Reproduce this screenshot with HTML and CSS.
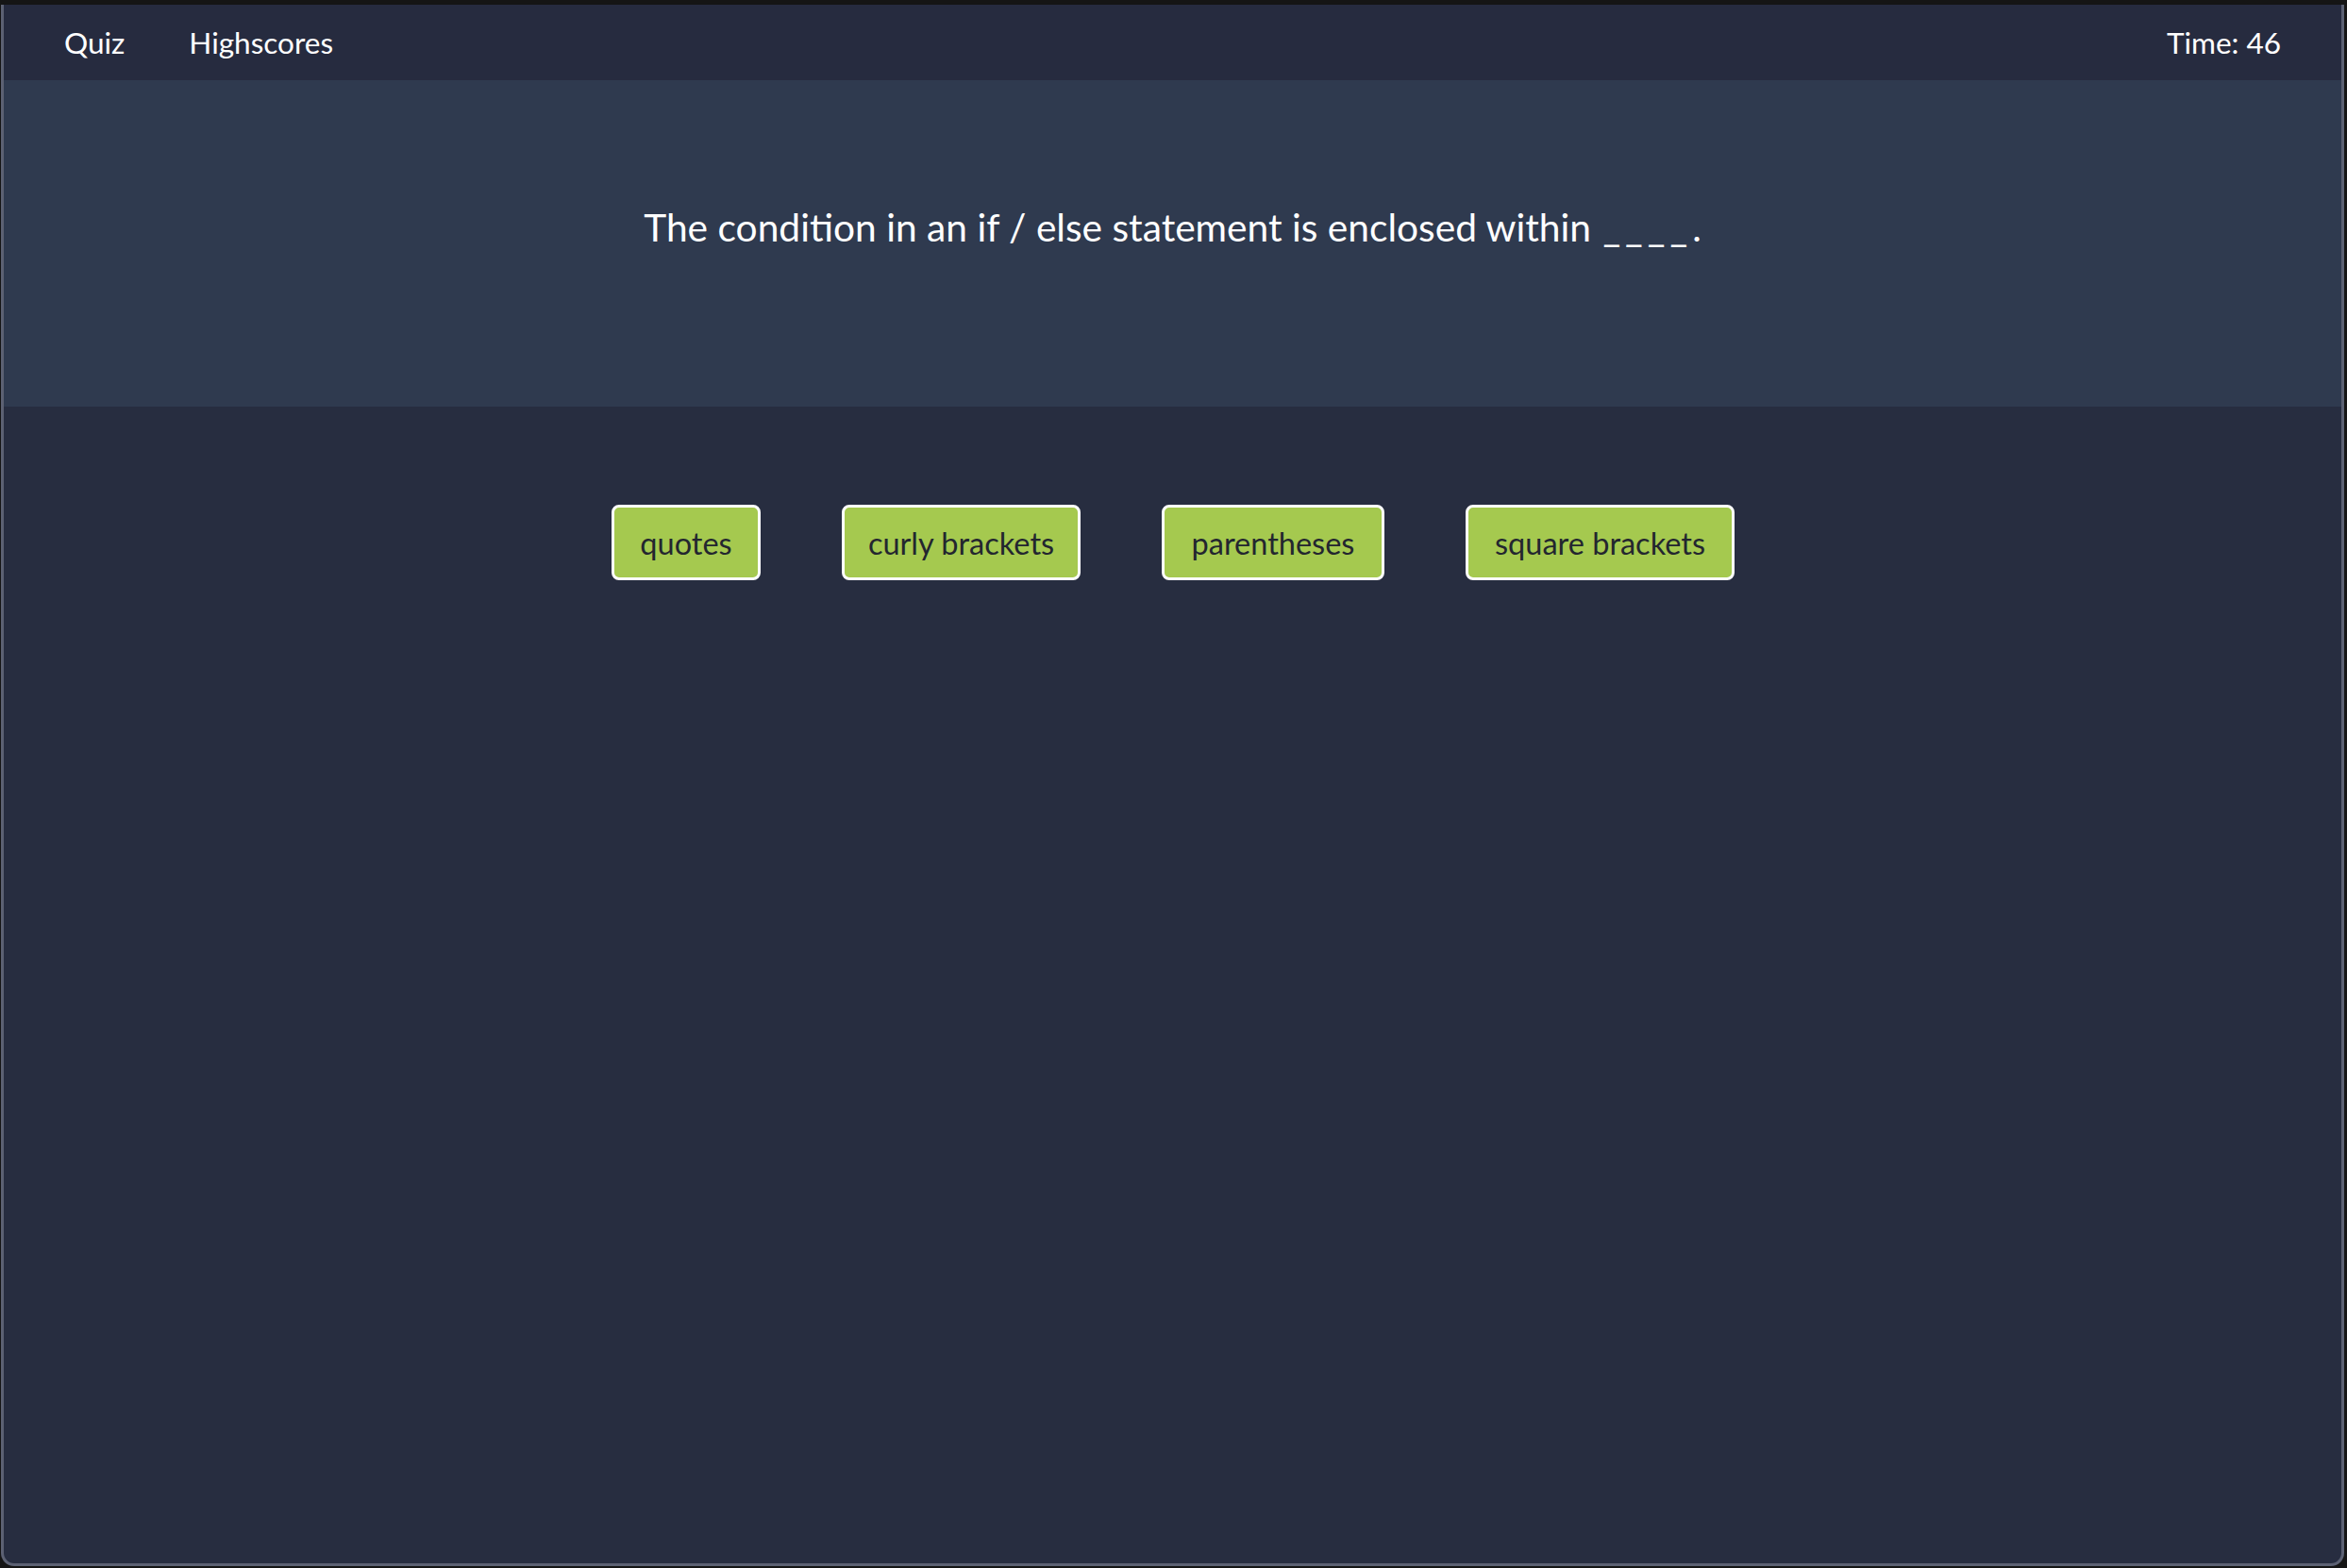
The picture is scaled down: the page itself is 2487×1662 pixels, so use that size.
FILE: index.html
```html
<!DOCTYPE html>
<html lang="en">
<head>
<meta charset="utf-8">
<title>Quiz</title>
<link rel="stylesheet" href="styles.css">
</head>
<body>
<div class="window">
  <header class="topbar">
    <nav class="nav">
      <a class="nav-link" href="#">Quiz</a>
      <a class="nav-link" href="#">Highscores</a>
    </nav>
    <div class="timer">Time: 46</div>
  </header>
  <section class="question">
    <h1 class="question-text">The condition in an if / else statement is enclosed within <span class="blank">____</span>.</h1>
  </section>
  <main class="answers">
    <button class="answer answer-quotes">quotes</button>
    <button class="answer answer-curly">curly brackets</button>
    <button class="answer answer-paren">parentheses</button>
    <button class="answer answer-square">square brackets</button>
  </main>
</div>
</body>
</html>
```
FILE: styles.css
```css
html, body {
  margin: 0;
  padding: 0;
  height: 100%;
}
body {
  background: #151515;
  font-family: Lato, "Open Sans", sans-serif;
  padding: 5px 3px 2px 1px;
  box-sizing: border-box;
}
.window {
  height: 100%;
  box-sizing: border-box;
  border: 3px solid #5c6173;
  border-top: none;
  border-radius: 0 0 14px 14px;
  background: #272d40;
  display: flex;
  flex-direction: column;
  overflow: hidden;
}
.topbar {
  height: 80px;
  flex: none;
  background: #262b3f;
  display: flex;
  align-items: center;
  justify-content: space-between;
  padding: 0 64px 0 64px;
  color: #fff;
  font-size: 31.5px;
}
.nav {
  display: flex;
  gap: 68px;
}
.nav-link {
  color: #fff;
  text-decoration: none;
}
.question {
  height: 346px;
  flex: none;
  background: #2f3a4f;
  display: flex;
  justify-content: center;
  padding-top: 126px;
  box-sizing: border-box;
}
.question-text {
  margin: 0;
  color: #fff;
  font-weight: 400;
  font-size: 40.7px;
  line-height: 60px;
  height: 60px;
}
.blank {
  letter-spacing: 5px;
  margin-left: 2px;
}
.answers {
  display: flex;
  align-items: flex-start;
  padding: 104px 0 0 644px;
  gap: 86px;
}
.answer {
  flex: none;
  height: 80px;
  box-sizing: border-box;
  background: #a5c94f;
  border: 3px solid #ffffff;
  border-radius: 8px;
  color: #23262f;
  font-family: inherit;
  font-size: 32.5px;
  padding: 0;
  white-space: nowrap;
  display: flex;
  align-items: center;
  justify-content: center;
}
.answer-quotes { width: 158px; }
.answer-curly { width: 253px; }
.answer-paren { width: 236px; }
.answer-square { width: 285px; }
```
